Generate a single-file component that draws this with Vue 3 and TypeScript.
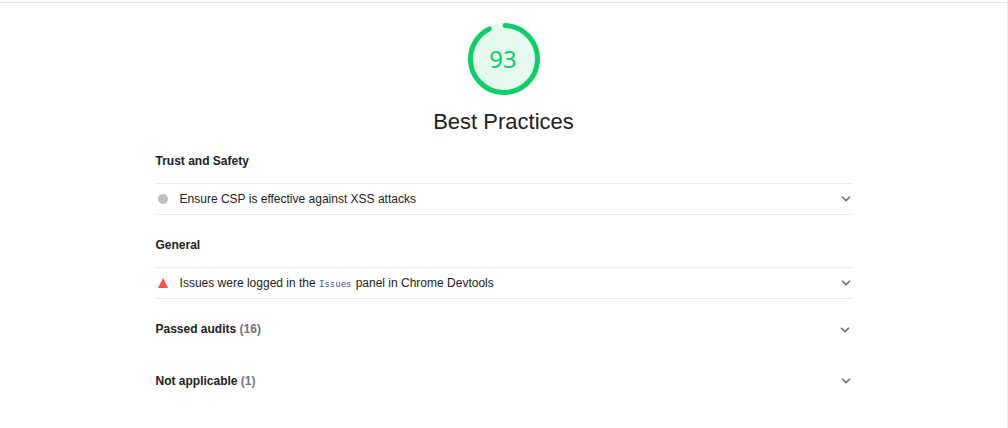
<script setup lang="ts">
interface Audit {
  icon: 'circle' | 'triangle'
  before: string
  code?: string
  after?: string
}
interface Group {
  title: string
  audits: Audit[]
}
interface Clump {
  title: string
  count: number
  kind: string
}

const score = 93
const radius = 33.5
const circumference = 2 * Math.PI * radius
const capLength = 2
const arc = `${(circumference * score) / 100 - capLength} ${circumference}`

const groups: Group[] = [
  { title: 'Trust and Safety', audits: [{ icon: 'circle', before: 'Ensure CSP is effective against XSS attacks' }] },
  { title: 'General', audits: [{ icon: 'triangle', before: 'Issues were logged in the ', code: 'Issues', after: ' panel in Chrome Devtools' }] },
]
const clumps: Clump[] = [
  { title: 'Passed audits', count: 16, kind: 'passed' },
  { title: 'Not applicable', count: 1, kind: 'notapplicable' },
]
</script>

<template>
  <main class="report">
    <div class="category">
      <header class="header">
        <div class="gauge">
          <svg class="gauge-ring" viewBox="0 0 72 72">
            <circle class="gauge-base" cx="36" cy="36" r="36" />
            <circle class="gauge-arc" cx="36" cy="36" :r="radius" :stroke-dasharray="arc" transform="rotate(-88.2 36 36)" />
          </svg>
          <span class="score">{{ score }}</span>
        </div>
        <h1 class="title">Best Practices</h1>
      </header>

      <section v-for="group in groups" :key="group.title" class="group">
        <h2 class="heading">{{ group.title }}</h2>
        <div v-for="audit in group.audits" :key="audit.before" class="audit">
          <svg class="mark" viewBox="0 0 10 10">
            <circle v-if="audit.icon === 'circle'" cx="5" cy="5" r="5" fill="#bdbdbd" />
            <path v-else d="M5 0 10 10H0Z" fill="#ff4e42" />
          </svg>
          <span class="text">{{ audit.before }}<code v-if="audit.code">{{ audit.code }}</code>{{ audit.after }}</span>
          <svg class="chevron" viewBox="0 0 10 6"><path d="M1 .8 5 4.6 9 .8" /></svg>
        </div>
      </section>

      <section v-for="clump in clumps" :key="clump.title" class="clump" :class="clump.kind">
        <h2 class="heading">{{ clump.title }} <span class="count">({{ clump.count }})</span></h2>
        <svg class="chevron" viewBox="0 0 10 6"><path d="M1 .8 5 4.6 9 .8" /></svg>
      </section>
    </div>
  </main>
</template>

<style>
body {
  margin: 0;
  background: #fff;
}
</style>

<style scoped>
.report {
  box-sizing: border-box;
  width: 1008px;
  height: 428px;
  margin: 0;
  padding-top: 2px;
  border-right: 1px solid #ebebeb;
  overflow: hidden;
  color: #212121;
  font-family: "Liberation Sans", Arial, sans-serif;
  font-size: 12px;
  background: linear-gradient(#e0e0e0, #e0e0e0) 0 2px / 100% 1px no-repeat #fff;
}
.category {
  width: 696px;
  margin-left: 156px;
}
.header {
  display: flex;
  flex-direction: column;
  align-items: center;
  height: 149px;
  padding-top: 21px;
  box-sizing: border-box;
}
.gauge {
  display: grid;
  place-items: center;
  width: 72px;
  height: 72px;
}
.gauge-ring,
.score {
  grid-area: 1 / 1;
}
.gauge-ring {
  width: 72px;
  height: 72px;
}
.gauge-base {
  fill: #e6f9ef;
}
.gauge-arc {
  fill: none;
  stroke: #0cce6b;
  stroke-width: 5;
  stroke-linecap: round;
}
.score {
  margin-right: 2px;
  color: #0cce6b;
  font: 24px/30px "Noto Sans", sans-serif;
}
.title {
  margin: 13px 1px 0 0;
  font-size: 22px;
  line-height: 28px;
  font-weight: 400;
}
.group {
  height: 84px;
}
.heading {
  margin: 0 0 0 -0.5px;
  font-size: 12px;
  line-height: 20px;
  font-weight: 700;
}
.group .heading {
  height: 32px;
}
.audit {
  display: flex;
  align-items: center;
  box-sizing: border-box;
  height: 32px;
  border-top: 1px solid #ebebeb;
  border-bottom: 1px solid #ebebeb;
}
.mark {
  width: 10px;
  height: 10px;
  margin: 0 11.6px 1px 2px;
}
.text {
  flex: 1;
  line-height: 20px;
  white-space: pre;
}
.text code {
  margin-right: 0.8px;
  color: #3f51b5;
  font: 9px "DejaVu Sans Mono", monospace;
}
.chevron {
  width: 10px;
  height: 6px;
  margin-right: 1px;
}
.chevron path {
  fill: none;
  stroke: #6e6e6e;
  stroke-width: 1.5;
}
.clump {
  display: flex;
  align-items: center;
  justify-content: space-between;
  height: 20px;
  margin-bottom: 32px;
}
.passed .chevron {
  margin: 2px 2px 0 0;
}
.count {
  color: #757575;
}
</style>
